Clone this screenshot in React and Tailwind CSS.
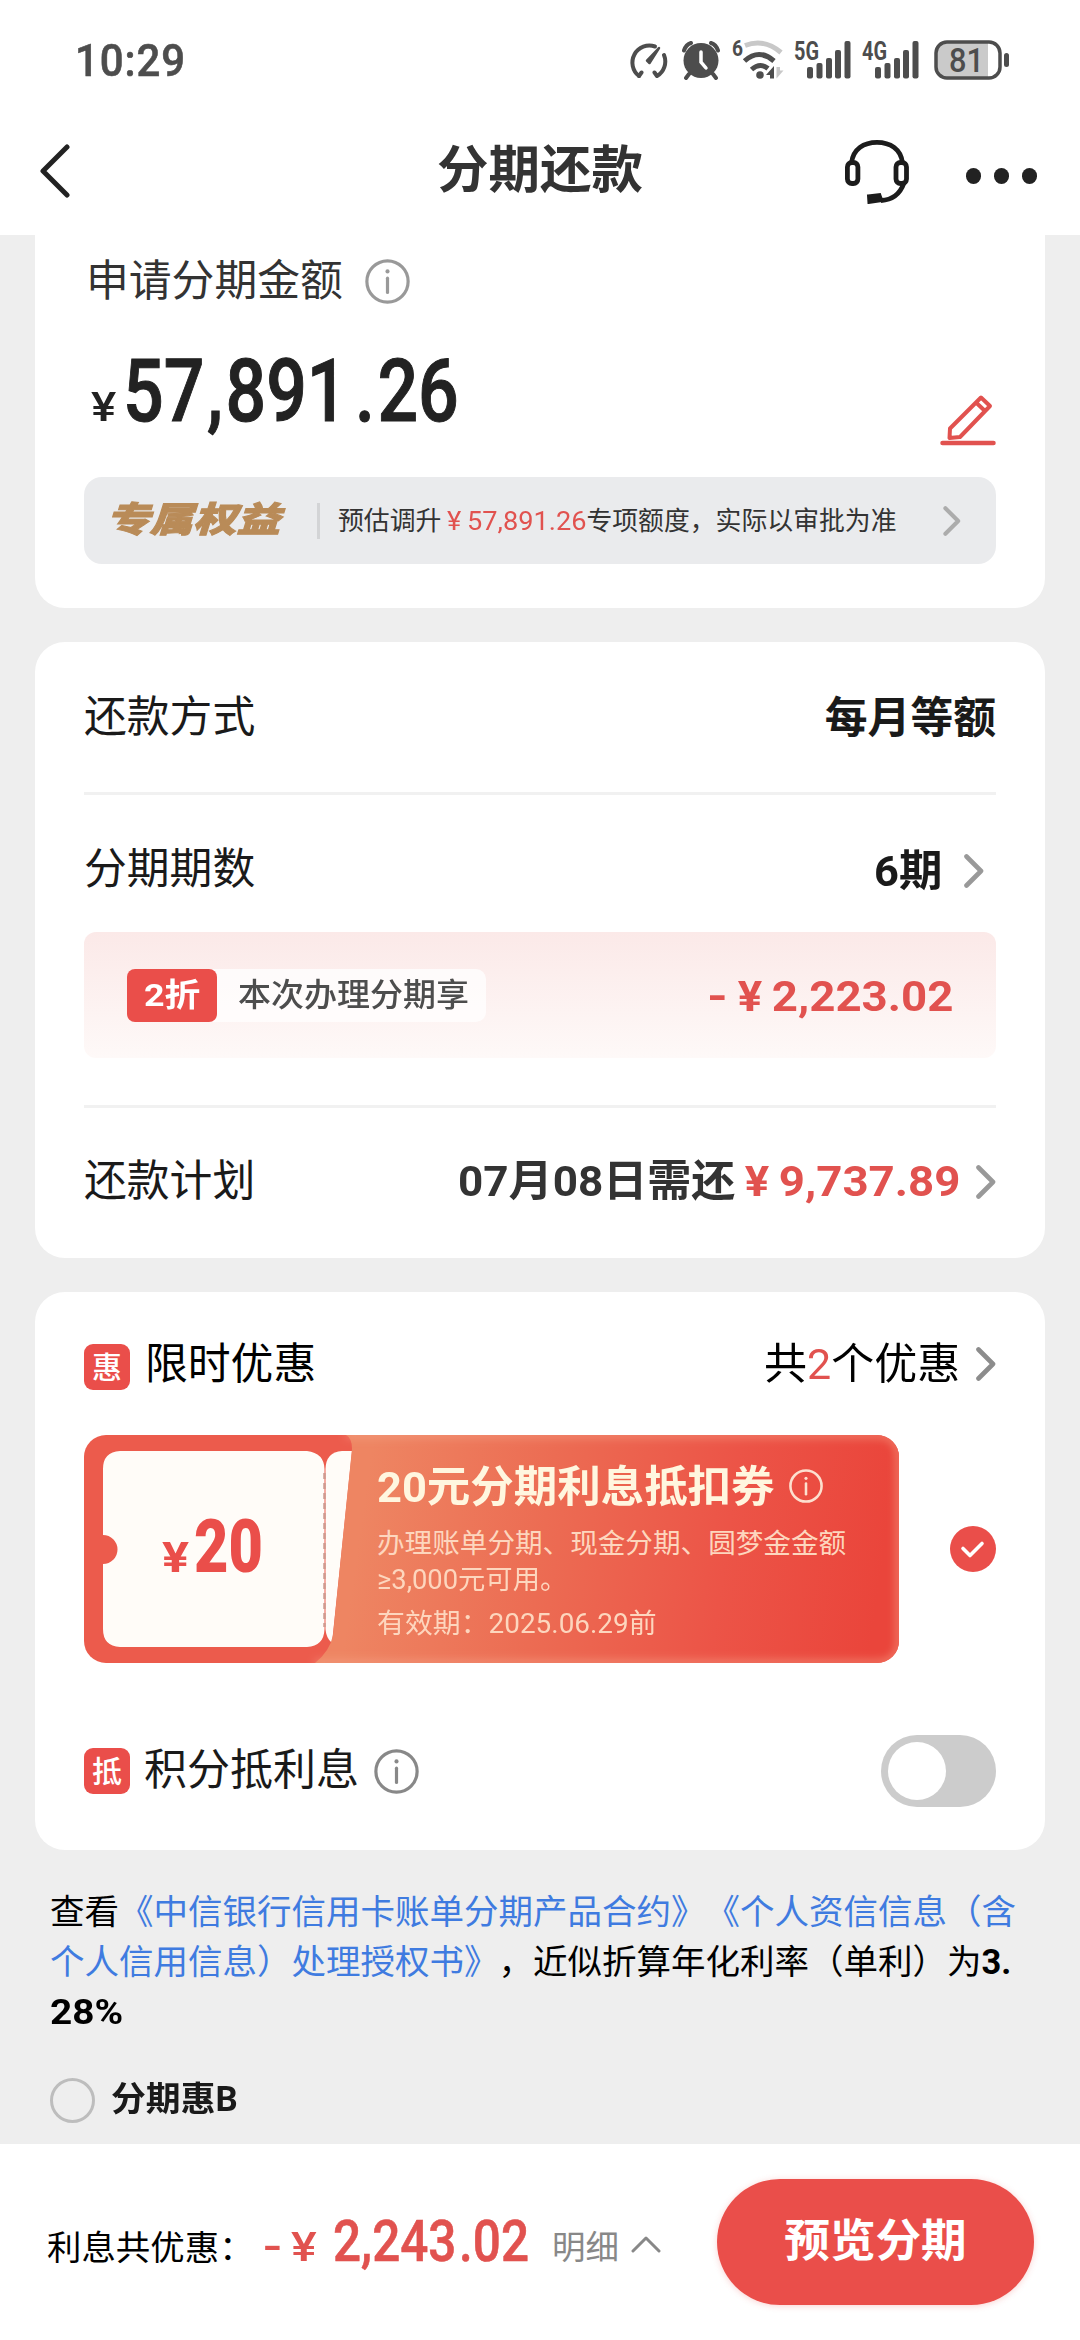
import React, { useLayoutEffect, useRef } from "react";

// Stretches or condenses a line of text to the width of its box.
function Fit({ className = "", children }) {
  const outer = useRef(null);
  const inner = useRef(null);
  useLayoutEffect(() => {
    const ratio = outer.current.clientWidth / inner.current.offsetWidth;
    inner.current.style.transform = `scaleX(${ratio})`;
  }, []);
  return (
    <span ref={outer} className={`block shrink-0 whitespace-nowrap ${className}`}>
      <span ref={inner} className="inline-block origin-left">
        {children}
      </span>
    </span>
  );
}

// Currency sign set in a wide cell.
function Yen() {
  return <span className="inline-block w-[0.96em] text-center">¥</span>;
}

function Info({ className = "", weight = 1.7 }) {
  return (
    <svg viewBox="0 0 24 24" fill="none" stroke="currentColor" className={`shrink-0 ${className}`}>
      <circle cx="12" cy="12" r="11" strokeWidth={weight} />
      <path d="M12 10.2v7.6" strokeWidth={weight} strokeLinecap="round" />
      <circle cx="12" cy="6.6" r="1.1" fill="currentColor" stroke="none" />
    </svg>
  );
}

function Chevron({ className = "" }) {
  return (
    <svg viewBox="0 0 20 34" fill="none" stroke="currentColor" strokeWidth="4.6" strokeLinecap="round" strokeLinejoin="round" className={`shrink-0 ${className}`}>
      <path d="M2.5 2.5 17 17 2.5 31.5" />
    </svg>
  );
}

function Signal({ label }) {
  return (
    <svg viewBox="0 -12 57 52" className="-mt-3 h-[52px] w-[57px] shrink-0" fill="#4d4d4d">
      <text x="0" y="20" fontFamily="Roboto" fontWeight="700" fontSize="26" textLength="25" lengthAdjust="spacingAndGlyphs">{label}</text>
      <rect x="13" y="27" width="6" height="11.500" rx="2" />
      <rect x="22.500" y="23" width="6" height="15.500" rx="2" />
      <rect x="32" y="18" width="6" height="20.500" rx="2" />
      <rect x="41" y="10" width="6" height="28.500" rx="2" />
      <rect x="50.500" y="1" width="6" height="37.500" rx="2" />
    </svg>
  );
}

function StatusBar() {
  return (
    <div className="flex h-[120px] items-center pl-[75px] pr-[70px] text-[#4d4d4d]">
      <Fit className="w-[111px] text-[45px] leading-[119px] font-medium tracking-[1px] [-webkit-text-stroke:0.6px_#4d4d4d]">10:29</Fit>
      <div className="ml-auto flex h-10 items-center">
        <svg viewBox="0 0 40 40" className="h-10 w-10" fill="none" stroke="#4d4d4d" strokeWidth="4" strokeLinecap="round">
          <path d="M11 36 A17 17 0 0 1 27 6.500" />
          <path d="M11 36l2.500-3.500M29 36l-2.500-3.500M29 36A17 17 0 0 0 36 15" />
          <path d="M31 8 19 20.500 21.500 23z" fill="#4d4d4d" strokeWidth="2.500" strokeLinejoin="round" />
        </svg>
        <svg viewBox="0 0 40 40" className="ml-[13px] h-10 w-10" fill="none" stroke="#4d4d4d" strokeLinecap="round">
          <circle cx="20" cy="20.500" r="17.500" fill="#4d4d4d" stroke="none" />
          <path d="M3 10.500Q5 4.500 10 3M37 10.500Q35 4.500 30 3M8 34l-3 4M32 34l3 4" strokeWidth="4" />
          <path d="M20 12v10l5 6" stroke="#fff" strokeWidth="3.500" />
        </svg>
        <svg viewBox="0 -8 52 58" className="ml-[11px] h-[58px] w-[52px]" fill="none" strokeWidth="5">
          <text x="0" y="16.500" fontFamily="Roboto" fontWeight="700" fontSize="22" textLength="11" lengthAdjust="spacingAndGlyphs" fill="#4d4d4d">6</text>
          <path d="M13 6.500Q32-1 49 13.500" stroke="#c8c8c8" />
          <path d="M12.500 22Q27 9 42 22M19.500 30.500Q28 23 36 29.500" stroke="#4d4d4d" />
          <circle cx="28" cy="36" r="3.800" fill="#4d4d4d" />
          <path d="M42 39.500V27l-8 9h4v3.500z" fill="#4d4d4d" />
          <path d="M44.500 28v11.500l7-8h-3.500V28z" fill="#c8c8c8" />
        </svg>
        <div className="ml-[10px] flex gap-[11px]">
          <Signal label="5G" />
          <Signal label="4G" />
        </div>
        <svg viewBox="0 0 76 40" className="ml-[15px] h-10 w-[76px]" fill="none">
          <path d="M13 3H54V37H13A10 10 0 0 1 3 27V13A10 10 0 0 1 13 3Z" fill="#cacaca" />
          <rect x="2" y="2" width="64" height="36" rx="11" stroke="#4d4d4d" strokeWidth="3.500" />
          <rect x="70" y="13" width="5" height="14" rx="2.500" fill="#4d4d4d" />
          <text x="15" y="32" fontFamily="Roboto" fontWeight="500" fontSize="34" textLength="35" lengthAdjust="spacingAndGlyphs" fill="#4d4d4d">81</text>
        </svg>
      </div>
    </div>
  );
}

function NavBar() {
  return (
    <div className="grid h-[115px] grid-cols-3 items-start">
      <svg viewBox="0 0 32 54" className="mt-6 ml-[39px] h-[54px] w-8" fill="none" stroke="#222" strokeWidth="5" strokeLinecap="round" strokeLinejoin="round">
        <path d="M28 3 4 27 28 51" />
      </svg>
      <h1 className="mt-[19px] text-center text-[51.500px] leading-[64px] font-bold text-[#333]">分期还款</h1>
      <div className="flex justify-end pt-5 pr-[43px]">
        <svg viewBox="0 0 64 64" className="h-16 w-16" fill="none" stroke="#1c1c1c" strokeWidth="4.800">
          <path d="M6.500 23C8 9 19 2.400 32 2.400S56 9 57.500 23" />
          <rect x="2.400" y="22.500" width="10.500" height="21" rx="4.500" />
          <rect x="51" y="22.500" width="10.500" height="21" rx="4.500" />
          <path d="M59 43C55 54 47 60 36 60.500" />
          <path d="M23 55.500 35 54 37.500 61 23.500 63z" fill="#1c1c1c" strokeWidth="2" />
        </svg>
        <div className="mt-7 ml-[57px] flex gap-[12.500px]">
          <i className="size-[15.500px] rounded-full bg-[#222]" />
          <i className="size-[15.500px] rounded-full bg-[#222]" />
          <i className="size-[15.500px] rounded-full bg-[#222]" />
        </div>
      </div>
    </div>
  );
}

function AmountCard() {
  return (
    <section className="h-[373px] rounded-b-[30px] bg-white px-[49px] pt-[14px]">
      <div className="flex h-16 items-center text-[#333]">
        <span className="pl-0.5 text-[42.800px] leading-[60px]">申请分期金额</span>
        <Info className="ml-[22px] size-[45px] text-[#999]" />
      </div>
      <div className="flex h-[164px] items-start justify-between">
        <div className="flex items-baseline pt-[28px] pl-[7px] text-[#222]">
          <Fit className="w-[25px] text-[40px] leading-[100px] font-medium">¥</Fit>
          <Fit className="ml-[7px] w-[336px] text-[87px] leading-[100px] font-medium [-webkit-text-stroke:1px_#222]">
            57<span className="px-[3px]">,</span>891<span className="pr-[3px] pl-[9px]">.</span>26
          </Fit>
        </div>
        <svg viewBox="0 0 56 52" className="mt-[81px] h-[52px] w-14" fill="none" stroke="#e1524f" strokeWidth="4" strokeLinejoin="round" strokeLinecap="round">
          <path d="M2.500 49H53.500" strokeWidth="4.500" />
          <path d="M41 3.500 50 12 20 43 9.500 44 10 34.500ZM36 8.500 45 17" />
        </svg>
      </div>
      <div className="flex h-[87px] items-center rounded-[18px] bg-[#eaebed] pl-[22px]">
        <Fit className="w-[174px] text-[35px] leading-[50px] font-black text-[#b98b58] italic [-webkit-text-stroke:1px_#b98b58]">专属权益</Fit>
        <i className="ml-[37px] h-9 w-[3px] bg-[#d3d4d6]" />
        <div className="ml-[18px] flex text-[25.850px] leading-[40px] text-[#333]">
          预估调升
          <Fit className="w-[145px] text-[#e1524f]">
            <Yen />57,891.26
          </Fit>
          专项额度，实际以审批为准
        </div>
        <Chevron className="ml-[46px] h-[30px] w-[18px] text-[#acacac]" />
      </div>
    </section>
  );
}

function PlanCard() {
  return (
    <section className="mt-[34px] h-[616px] rounded-[30px] bg-white px-[49px] text-[42.800px] leading-[60px] text-[#1a1a1a]">
      <div className="flex h-[153px] items-center justify-between border-b-[3px] border-[#f1f1f1] pb-[1px]">
        <span>还款方式</span>
        <b className="mt-[3px]">每月等额</b>
      </div>
      <div className="flex h-[137px] items-center pt-[11px]">
        <span>分期期数</span>
        <Fit className="mt-[4px] ml-auto w-[68px] font-bold">6期</Fit>
        <Chevron className="mt-[3px] mr-3 ml-[22px] h-[34px] w-5 text-[#999]" />
      </div>
      <div className="flex h-[126px] items-center rounded-xl bg-linear-to-b from-[#fbe9e8] to-[#fef9f8] px-[43px]">
        <div className="flex h-[53px] w-[359px] rounded-[10px] bg-white/75 text-[32px] leading-[52px]">
          <div className="w-[90px] rounded-lg bg-[#ea4e4a] pl-[17px] font-bold text-white">
            <Fit className="w-[56px]">2折</Fit>
          </div>
          <Fit className="ml-[21px] w-[231px] font-medium text-[#4d4d4d]">本次办理分期享</Fit>
        </div>
        <div className="ml-auto flex pt-0.5 font-bold text-[#e1524f]">
          <Fit className="w-[21px]">-</Fit>
          <Fit className="w-[225px]">
            <Yen />2,223.02
          </Fit>
        </div>
      </div>
      <div className="mt-[47px] flex h-[148px] items-center border-t-[3px] border-[#f1f1f1] pt-[1px]">
        <span>还款计划</span>
        <Fit className="ml-auto w-[277px] font-bold text-[#333]">07月08日需还</Fit>
        <Fit className="w-[225px] font-bold text-[#e1524f]">
          <Yen />9,737.89
        </Fit>
        <Chevron className="mt-0.5 ml-4 h-[34px] w-5 text-[#999]" />
      </div>
    </section>
  );
}

function Coupon() {
  return (
    <div className="relative h-[228px] w-[815px]">
      <svg viewBox="0 0 815 228" className="absolute inset-0 h-full w-full">
        <defs>
          <linearGradient id="warm" x1="0.100" y1="0" x2="1" y2="0.050">
            <stop offset="0" stopColor="#ee8562" />
            <stop offset="0.350" stopColor="#ec6c53" />
            <stop offset="0.700" stopColor="#ec5447" />
            <stop offset="1" stopColor="#ea453b" />
          </linearGradient>
          <filter id="glow" x="-10%" y="-10%" width="120%" height="120%">
            <feGaussianBlur stdDeviation="4" />
          </filter>
          <clipPath id="edge">
            <rect width="815" height="228" rx="22" />
          </clipPath>
        </defs>
        <g clipPath="url(#edge)">
          <rect width="815" height="228" fill="#ec5b4c" />
          <path d="M36 16H223Q240 18 240.500 34V194Q240 211 223 212H36Q19 211 19 194V129A14.500 14.500 0 0 0 19 100V34Q19 17 36 16Z" fill="#fffcf8" />
          <path d="M268 16H258Q242 17 241.500 34V194Q242 203 248 208Z" fill="#fffcf8" />
          <path d="M240.500 38V192" stroke="#cf9a8f" strokeWidth="2.500" strokeDasharray="6 4" />
          <path d="M262 0Q268 3 268 14L249 200Q246 216 231 228H815V0Z" fill="url(#warm)" />
          <path d="M262 0H793Q815 0 815 22V206Q815 228 793 228H231" fill="none" stroke="#f7a78c" strokeOpacity="0.700" strokeWidth="5" filter="url(#glow)" />
        </g>
      </svg>
      <div className="relative flex h-full">
        <div className="flex w-[293px] items-baseline pt-[62px] pl-[78px] text-[#ea4e4a]">
          <Fit className="w-[27px] text-[43px] leading-[100px] font-bold">¥</Fit>
          <Fit className="ml-[5px] w-[69px] text-[74px] leading-[100px] font-black">20</Fit>
        </div>
        <div className="pt-[22px] text-[27.600px] text-[#fdd6be]">
          <div className="flex h-[60px] items-center">
            <Fit className="w-[397px] text-[42.800px] leading-[60px] font-bold text-[#fff6df]">20元分期利息抵扣券</Fit>
            <Info className="mb-0.5 ml-[15px] size-[34px] text-[#fde0cf]" weight={1.8} />
          </div>
          <p className="mt-[9px] leading-[36px] whitespace-nowrap">办理账单分期、现金分期、圆梦金金额</p>
          <Fit className="w-[190px] leading-[36px]">≥3,000元可用。</Fit>
          <Fit className="mt-[8px] w-[280px] leading-[36px]">有效期：2025.06.29前</Fit>
        </div>
      </div>
    </div>
  );
}

function Tag({ children }) {
  return <span className="block size-[46px] shrink-0 rounded-[9px] bg-[#ea4e4a] text-center text-[30px] leading-[47px] font-medium text-white">{children}</span>;
}

function OfferCard() {
  return (
    <section className="mt-[34px] h-[558px] rounded-[30px] bg-white px-[49px] text-[42.800px] leading-[60px] text-black">
      <div className="flex h-[143px] items-center">
        <div className="pt-[7px]">
          <Tag>惠</Tag>
        </div>
        <span className="ml-[15px]">限时优惠</span>
        <Fit className="ml-auto w-[196px]">
          共<span className="text-[#e1524f]">2</span>个优惠
        </Fit>
        <Chevron className="ml-4 h-[34px] w-5 text-[#8c8c8c]" />
      </div>
      <div className="flex items-center justify-between">
        <Coupon />
        <svg viewBox="0 0 46 46" className="size-[46px]" fill="none">
          <circle cx="23" cy="23" r="23" fill="#ea4e4a" />
          <path d="M13 22.500 20 29.500 32 17.500" stroke="#fff" strokeWidth="3.600" strokeLinecap="round" strokeLinejoin="round" />
        </svg>
      </div>
      <div className="mt-[72px] flex h-[72px] items-center text-[#1a1a1a]">
        <Tag>抵</Tag>
        <span className="ml-[14px] pb-[2px] text-[43px]">积分抵利息</span>
        <Info className="ml-[15px] size-[45px] text-[#888]" />
        <div className="ml-auto h-[72px] w-[115px] rounded-full bg-[#ccc] p-[7px]">
          <div className="size-[58px] rounded-full bg-white" />
        </div>
      </div>
    </section>
  );
}

function Terms() {
  return (
    <div className="h-[294px] pt-[37px] pl-[50px] text-black">
      <div className="text-[34.500px] leading-[50px] whitespace-nowrap [text-spacing-trim:space-all]">
        <p>
          查看<span className="text-[#3f7be0]">《中信银行信用卡账单分期产品合约》《个人资信信息（含</span>
        </p>
        <p>
          <span className="text-[#3f7be0]">个人信用信息）处理授权书》</span>，近似折算年化利率（单利）为<b>3.</b>
        </p>
        <p>
          <Fit className="w-[73px] font-bold">28%</Fit>
        </p>
      </div>
      <div className="mt-[40px] flex h-[46px] items-center">
        <i className="size-[45px] rounded-full border-[3px] border-[#bdbdbd]" />
        <Fit className="ml-[16px] w-[127px] pb-[3px] text-[34.300px] leading-[40px] font-bold text-[#1a1a1a]">分期惠B</Fit>
      </div>
    </div>
  );
}

function Footer() {
  return (
    <footer className="flex h-[196px] items-start bg-white pl-[47px] pr-[46px] text-black">
      <span className="mt-[74px] w-[216px] shrink-0 text-[34.450px] leading-[60px] whitespace-nowrap">利息共优惠：</span>
      <div className="mt-[48px] flex items-baseline text-[#e1524f]">
        <Fit className="w-[19px] text-[44px] leading-[100px] font-medium">-</Fit>
        <Fit className="ml-[9px] w-[26px] text-[41px] leading-[100px] font-medium">¥</Fit>
        <Fit className="ml-[16px] w-[196px] text-[57px] leading-[100px] font-medium [-webkit-text-stroke:0.6px_#e1524f]">
          2,243<span className="pl-[3px]">.</span>02
        </Fit>
      </div>
      <span className="mt-[74px] ml-[23px] text-[33.500px] leading-[60px] whitespace-nowrap text-[#888]">明细</span>
      <svg viewBox="0 0 30 18" className="mt-[91px] ml-3 h-[18px] w-[30px] shrink-0" fill="none" stroke="#888" strokeWidth="3" strokeLinecap="round" strokeLinejoin="round">
        <path d="M2 16 15 3 28 16" />
      </svg>
      <button className="mt-[35px] ml-auto h-[126px] w-[317px] shrink-0 rounded-full bg-[#ea4e4a] text-[45.600px] font-bold text-white shadow-[0_1px_6px_rgba(234,78,74,0.25)]">预览分期</button>
    </footer>
  );
}

export default function App() {
  return (
    <div className="h-[2340px] w-[1080px] overflow-hidden bg-[#eeeeee] font-['Roboto','Noto_Sans_CJK_SC',sans-serif]">
      <header className="bg-white">
        <StatusBar />
        <NavBar />
      </header>
      <main className="px-[35px]">
        <AmountCard />
        <PlanCard />
        <OfferCard />
      </main>
      <Terms />
      <Footer />
    </div>
  );
}
